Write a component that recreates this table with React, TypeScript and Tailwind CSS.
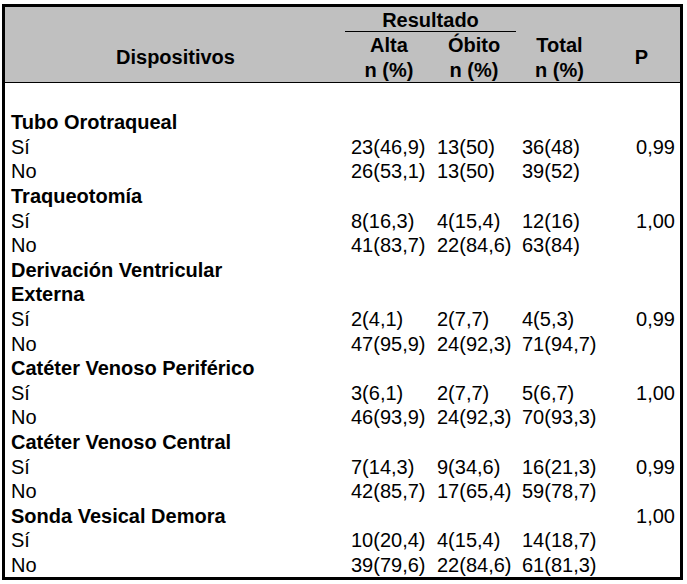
const ROWS: { label: string; bold?: boolean; alta?: string; obito?: string; total?: string; p?: string }[] = [
  { label: 'Tubo Orotraqueal', bold: true },
  { label: 'Sí', alta: '23(46,9)', obito: '13(50)', total: '36(48)', p: '0,99' },
  { label: 'No', alta: '26(53,1)', obito: '13(50)', total: '39(52)' },
  { label: 'Traqueotomía', bold: true },
  { label: 'Sí', alta: '8(16,3)', obito: '4(15,4)', total: '12(16)', p: '1,00' },
  { label: 'No', alta: '41(83,7)', obito: '22(84,6)', total: '63(84)' },
  { label: 'Derivación Ventricular', bold: true },
  { label: 'Externa', bold: true },
  { label: 'Sí', alta: '2(4,1)', obito: '2(7,7)', total: '4(5,3)', p: '0,99' },
  { label: 'No', alta: '47(95,9)', obito: '24(92,3)', total: '71(94,7)' },
  { label: 'Catéter Venoso Periférico', bold: true },
  { label: 'Sí', alta: '3(6,1)', obito: '2(7,7)', total: '5(6,7)', p: '1,00' },
  { label: 'No', alta: '46(93,9)', obito: '24(92,3)', total: '70(93,3)' },
  { label: 'Catéter Venoso Central', bold: true },
  { label: 'Sí', alta: '7(14,3)', obito: '9(34,6)', total: '16(21,3)', p: '0,99' },
  { label: 'No', alta: '42(85,7)', obito: '17(65,4)', total: '59(78,7)' },
  { label: 'Sonda Vesical Demora', bold: true, p: '1,00' },
  { label: 'Sí', alta: '10(20,4)', obito: '4(15,4)', total: '14(18,7)' },
  { label: 'No', alta: '39(79,6)', obito: '22(84,6)', total: '61(81,3)' },
];

export default function App() {
  return (
    <div className="w-[687px] h-[584px] bg-white pt-[4px] pl-[2px] font-['Liberation_Sans',Arial,sans-serif] text-[20px] leading-[20px] text-black">
      <div className="w-[681px] border-[3px] border-black">
        <table className="w-[675px] table-fixed border-collapse">
          <colgroup>
            <col className="w-[341px]" />
            <col className="w-[86px]" />
            <col className="w-[84px]" />
            <col className="w-[87px]" />
            <col className="w-[77px]" />
          </colgroup>
          <thead className="bg-[#c0c0c0] font-bold">
            <tr className="h-[25px]">
              <th className="p-0"></th>
              <th colSpan={2} className="p-0 align-middle">
                <div className="ml-[-1px] h-[25px] border-b border-black flex items-center justify-center pt-[1px]">
                  Resultado
                </div>
              </th>
              <th className="p-0"></th>
              <th className="p-0"></th>
            </tr>
            <tr className="h-[25px]">
              <th rowSpan={2} className="p-0 pt-[1px] font-bold align-middle">Dispositivos</th>
              <th className="p-0 pt-[1px] font-bold">Alta</th>
              <th className="p-0 pt-[1px] font-bold">Óbito</th>
              <th className="p-0 pt-[1px] font-bold">Total</th>
              <th rowSpan={2} className="p-0 pt-[1px] font-bold align-middle">P</th>
            </tr>
            <tr className="h-[25px] border-b border-black">
              <th className="p-0 pt-[1px] font-bold">n (%)</th>
              <th className="p-0 pt-[1px] font-bold">n (%)</th>
              <th className="p-0 pt-[1px] font-bold">n (%)</th>
            </tr>
          </thead>
          <tbody>
            <tr className="h-[28px]">
              <td colSpan={5} className="p-0"></td>
            </tr>
            {ROWS.map((r, i) => (
              <tr key={i} className="h-[24.6px]">
                <td className={`p-0 pl-[6px] whitespace-nowrap ${r.bold ? 'font-bold' : ''}`}>{r.label}</td>
                <td className="p-0 pl-[5px] whitespace-nowrap">{r.alta}</td>
                <td className="p-0 pl-[5px] whitespace-nowrap">{r.obito}</td>
                <td className="p-0 pl-[6px] whitespace-nowrap">{r.total}</td>
                <td className="p-0 pr-[5px] text-right whitespace-nowrap">{r.p}</td>
              </tr>
            ))}
          </tbody>
        </table>
      </div>
    </div>
  );
}
